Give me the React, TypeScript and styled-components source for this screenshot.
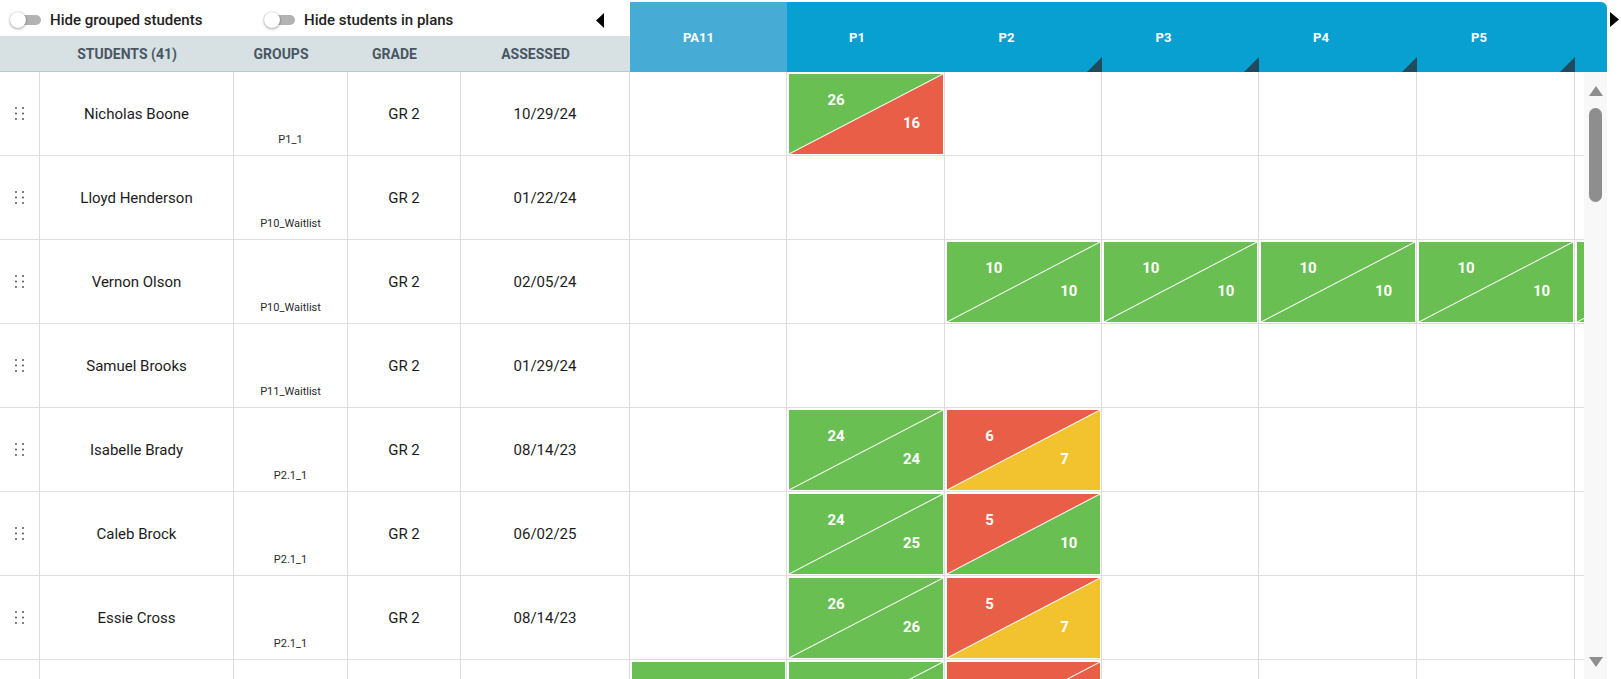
import React from "react";
import styled, { createGlobalStyle, css } from "styled-components";

const GlobalStyle = createGlobalStyle`
  *, *::before, *::after { box-sizing: border-box; }
  html, body { margin: 0; padding: 0; background: #ffffff; }
  body {
    font-family: Roboto, "Liberation Sans", Arial, sans-serif;
    color: #1c1c1c;
    overflow: hidden;
  }
`;

const LINE = "#dedede";
const ROW_H = 84;
const LEFT_COLS = "40px 194px 114px 113px 169px";
const PLAN_WIDTHS = [157, 158, 157, 157, 158, 158, 158];

type Tone = "green" | "red" | "yellow";
const TONES: Record<Tone, string> = {
  green: "#69bf52",
  red: "#e85e47",
  yellow: "#f3c32f",
};

type Score = { top?: number; bottom?: number; a: Tone; b: Tone; split: boolean };
const sc = (top: number, bottom: number, a: Tone, b: Tone): Score => ({ top, bottom, a, b, split: true });
const blank = (a: Tone, b: Tone): Score => ({ a, b, split: true });
const solid = (a: Tone): Score => ({ a, b: a, split: false });

type Student = {
  id: string;
  name: string;
  group: string;
  grade: string;
  assessed: string;
  plans: (Score | null)[];
};

const PLANS = [
  { label: "PA11", light: true, marked: false, pad: 20 },
  { label: "P1", light: false, marked: false, pad: 18 },
  { label: "P2", light: false, marked: true, pad: 34 },
  { label: "P3", light: false, marked: true, pad: 34 },
  { label: "P4", light: false, marked: true, pad: 34 },
  { label: "P5", light: false, marked: true, pad: 34 },
];

const STUDENTS: Student[] = [
  { id: "s1", name: "Nicholas Boone", group: "P1_1", grade: "GR 2", assessed: "10/29/24", plans: [null, sc(26, 16, "green", "red")] },
  { id: "s2", name: "Lloyd Henderson", group: "P10_Waitlist", grade: "GR 2", assessed: "01/22/24", plans: [] },
  {
    id: "s3",
    name: "Vernon Olson",
    group: "P10_Waitlist",
    grade: "GR 2",
    assessed: "02/05/24",
    plans: [null, null, sc(10, 10, "green", "green"), sc(10, 10, "green", "green"), sc(10, 10, "green", "green"), sc(10, 10, "green", "green"), blank("green", "green")],
  },
  { id: "s4", name: "Samuel Brooks", group: "P11_Waitlist", grade: "GR 2", assessed: "01/29/24", plans: [] },
  { id: "s5", name: "Isabelle Brady", group: "P2.1_1", grade: "GR 2", assessed: "08/14/23", plans: [null, sc(24, 24, "green", "green"), sc(6, 7, "red", "yellow")] },
  { id: "s6", name: "Caleb Brock", group: "P2.1_1", grade: "GR 2", assessed: "06/02/25", plans: [null, sc(24, 25, "green", "green"), sc(5, 10, "red", "green")] },
  { id: "s7", name: "Essie Cross", group: "P2.1_1", grade: "GR 2", assessed: "08/14/23", plans: [null, sc(26, 26, "green", "green"), sc(5, 7, "red", "yellow")] },
  { id: "s8", name: "", group: "", grade: "", assessed: "", plans: [solid("green"), blank("green", "green"), blank("red", "red")] },
];

/* ---------- layout ---------- */

const Page = styled.div`
  display: flex;
  width: 1621px;
  height: 679px;
  overflow: hidden;
`;

const LeftPanel = styled.section`
  flex: 0 0 630px;
  display: flex;
  flex-direction: column;
  min-width: 0;
`;

const Toolbar = styled.div`
  flex: 0 0 36px;
  display: grid;
  grid-template-columns: 254px 1fr auto;
  align-items: center;
  padding: 4px 25px 0 10px;
`;

const ToggleItem = styled.label`
  display: flex;
  align-items: center;
  gap: 9px;
  font-size: 15px;
  font-weight: 500;
  color: #222;
  white-space: nowrap;
  cursor: pointer;
`;

const Switch = styled.span`
  position: relative;
  display: inline-flex;
  align-items: center;
  justify-content: flex-end;
  width: 31px;
  height: 16px;
`;

const Track = styled.span`
  width: 24px;
  height: 10px;
  border-radius: 5px;
  background: #b3b3b3;
`;

const Thumb = styled.span`
  position: absolute;
  left: 0;
  top: 0;
  width: 16px;
  height: 16px;
  border-radius: 50%;
  background: #ffffff;
  box-shadow: 0 1px 3px rgba(0, 0, 0, 0.35), 0 0 1px rgba(0, 0, 0, 0.25);
`;

const NavArrow = styled.svg`
  display: block;
  width: 9px;
  height: 15px;
`;

const ColumnHeader = styled.div`
  flex: 0 0 36px;
  display: grid;
  grid-template-columns: ${LEFT_COLS};
  background: #d7e1e4;
  border-bottom: 1px solid #b8c7cc;
`;

const HeaderLabel = styled.div`
  display: flex;
  align-items: center;
  justify-content: center;
  padding-right: 20px;
  font-size: 14px;
  font-weight: 700;
  color: #4a5663;
  text-transform: uppercase;
  white-space: nowrap;
`;

const Rows = styled.div`
  flex: 1;
  min-height: 0;
  overflow: hidden;
  display: flex;
  flex-direction: column;
`;

const StudentRow = styled.div`
  flex: 0 0 ${ROW_H}px;
  display: grid;
  grid-template-columns: ${LEFT_COLS};
`;

const Cell = styled.div<{ $variant?: "text" | "group" | "handle" }>`
  border-right: 1px solid ${LINE};
  border-bottom: 1px solid ${LINE};
  display: flex;
  justify-content: center;
  align-items: center;
  font-size: 15px;
  color: #1c1c1c;
  white-space: nowrap;
  ${(p) =>
    p.$variant === "group" &&
    css`
      align-items: flex-end;
      padding-bottom: 9px;
      font-size: 11px;
      color: #2a2a2a;
    `}
`;

const Grip = styled.svg`
  width: 9px;
  height: 13px;
  display: block;
  fill: #4a4a4a;
`;

const PlanPanel = styled.section`
  flex: 0 0 977px;
  display: flex;
  flex-direction: column;
  min-width: 0;
`;

const PlanHeader = styled.div`
  flex: 0 0 70px;
  margin-top: 2px;
  display: flex;
  background: #089fd1;
  border-top-right-radius: 6px;
  overflow: hidden;
`;

const PlanHead = styled.div<{ $w: number; $light: boolean; $marked: boolean; $pad: number }>`
  position: relative;
  flex: 0 0 ${(p) => p.$w}px;
  display: flex;
  align-items: center;
  justify-content: center;
  padding-right: ${(p) => p.$pad}px;
  background: ${(p) => (p.$light ? "#46abd5" : "transparent")};
  color: #ffffff;
  font-size: 13px;
  font-weight: 700;
  ${(p) =>
    p.$marked &&
    css`
      &::after {
        content: "";
        position: absolute;
        right: 0;
        bottom: 0;
        width: 15px;
        height: 15px;
        background: #1f4b5c;
        clip-path: polygon(100% 0, 100% 100%, 0 100%);
      }
    `}
`;

const PlanBody = styled.div`
  flex: 1;
  min-height: 0;
  display: flex;
`;

const PlanViewport = styled.div`
  flex: 1;
  min-width: 0;
  overflow: hidden;
  display: flex;
  flex-direction: column;
`;

const PlanRow = styled.div`
  flex: 0 0 ${ROW_H}px;
  display: flex;
`;

const PlanCell = styled.div<{ $w: number }>`
  flex: 0 0 ${(p) => p.$w}px;
  display: flex;
  padding: 2px 1px 1px 2px;
  border-right: 1px solid ${LINE};
  border-bottom: 1px solid ${LINE};
`;

const ScoreBlock = styled.div<{ $a: string; $b: string; $split: boolean }>`
  flex: 1;
  display: flex;
  flex-direction: column;
  gap: 7px;
  padding-top: 18px;
  color: #ffffff;
  font-size: 15px;
  font-weight: 700;
  line-height: 16px;
  background: ${(p) =>
    p.$split
      ? `linear-gradient(to bottom right, ${p.$a} 0, ${p.$a} calc(50% - 1px), #ffffff 50%, ${p.$b} calc(50% + 1px), ${p.$b} 100%)`
      : p.$a};
`;

const ScoreTop = styled.span`
  margin-left: 25%;
`;

const ScoreBottom = styled.span`
  margin-left: 74%;
`;

const ScrollTrack = styled.div`
  flex: 0 0 23px;
  display: flex;
  flex-direction: column;
  align-items: center;
  padding: 14px 0 12px;
  background: #f8f8f8;
`;

const ScrollArrow = styled.svg`
  width: 14px;
  height: 10px;
  display: block;
  fill: #8e8e8e;
`;

const ScrollThumb = styled.div`
  width: 13px;
  height: 94px;
  margin-top: 12px;
  border-radius: 7px;
  background: #8e8e8e;
`;

const ScrollSpacer = styled.div`
  flex: 1;
`;

const RightRail = styled.div`
  flex: 0 0 14px;
  padding: 12px 0 0 3px;
`;

/* ---------- parts ---------- */

const Toggle: React.FC<{ label: string }> = ({ label }) => (
  <ToggleItem>
    <Switch>
      <Track />
      <Thumb />
    </Switch>
    {label}
  </ToggleItem>
);

const GripIcon = () => (
  <Grip viewBox="0 0 9 13">
    {[1, 6.5, 12].map((y) => (
      <React.Fragment key={y}>
        <circle cx="1" cy={y} r="0.95" />
        <circle cx="8" cy={y} r="0.95" />
      </React.Fragment>
    ))}
  </Grip>
);

export default function App() {
  return (
    <>
      <GlobalStyle />
      <Page>
        <LeftPanel>
          <Toolbar>
            <Toggle label="Hide grouped students" />
            <Toggle label="Hide students in plans" />
            <NavArrow viewBox="0 0 9 15">
              <polygon points="8,0 8,15 0,7.5" fill="#000" />
            </NavArrow>
          </Toolbar>
          <ColumnHeader>
            <HeaderLabel />
            <HeaderLabel>Students (41)</HeaderLabel>
            <HeaderLabel>Groups</HeaderLabel>
            <HeaderLabel>Grade</HeaderLabel>
            <HeaderLabel>Assessed</HeaderLabel>
          </ColumnHeader>
          <Rows>
            {STUDENTS.map((s) => (
              <StudentRow key={s.id}>
                <Cell $variant="handle">
                  <GripIcon />
                </Cell>
                <Cell>{s.name}</Cell>
                <Cell $variant="group">{s.group}</Cell>
                <Cell>{s.grade}</Cell>
                <Cell>{s.assessed}</Cell>
              </StudentRow>
            ))}
          </Rows>
        </LeftPanel>

        <PlanPanel>
          <PlanHeader>
            {PLANS.map((p, i) => (
              <PlanHead key={p.label} $w={PLAN_WIDTHS[i]} $light={p.light} $marked={p.marked} $pad={p.pad}>
                {p.label}
              </PlanHead>
            ))}
          </PlanHeader>
          <PlanBody>
            <PlanViewport>
              {STUDENTS.map((s) => (
                <PlanRow key={s.id}>
                  {PLAN_WIDTHS.map((w, i) => {
                    const score = s.plans[i];
                    return (
                      <PlanCell key={i} $w={w}>
                        {score && (
                          <ScoreBlock $a={TONES[score.a]} $b={TONES[score.b]} $split={score.split}>
                            {score.top !== undefined && <ScoreTop>{score.top}</ScoreTop>}
                            {score.bottom !== undefined && <ScoreBottom>{score.bottom}</ScoreBottom>}
                          </ScoreBlock>
                        )}
                      </PlanCell>
                    );
                  })}
                </PlanRow>
              ))}
            </PlanViewport>
            <ScrollTrack>
              <ScrollArrow viewBox="0 0 14 10">
                <polygon points="7,0 14,10 0,10" />
              </ScrollArrow>
              <ScrollThumb />
              <ScrollSpacer />
              <ScrollArrow viewBox="0 0 14 10">
                <polygon points="0,0 14,0 7,10" />
              </ScrollArrow>
            </ScrollTrack>
          </PlanBody>
        </PlanPanel>

        <RightRail>
          <NavArrow viewBox="0 0 9 15">
            <polygon points="0,0 9,7.5 0,15" fill="#000" />
          </NavArrow>
        </RightRail>
      </Page>
    </>
  );
}
